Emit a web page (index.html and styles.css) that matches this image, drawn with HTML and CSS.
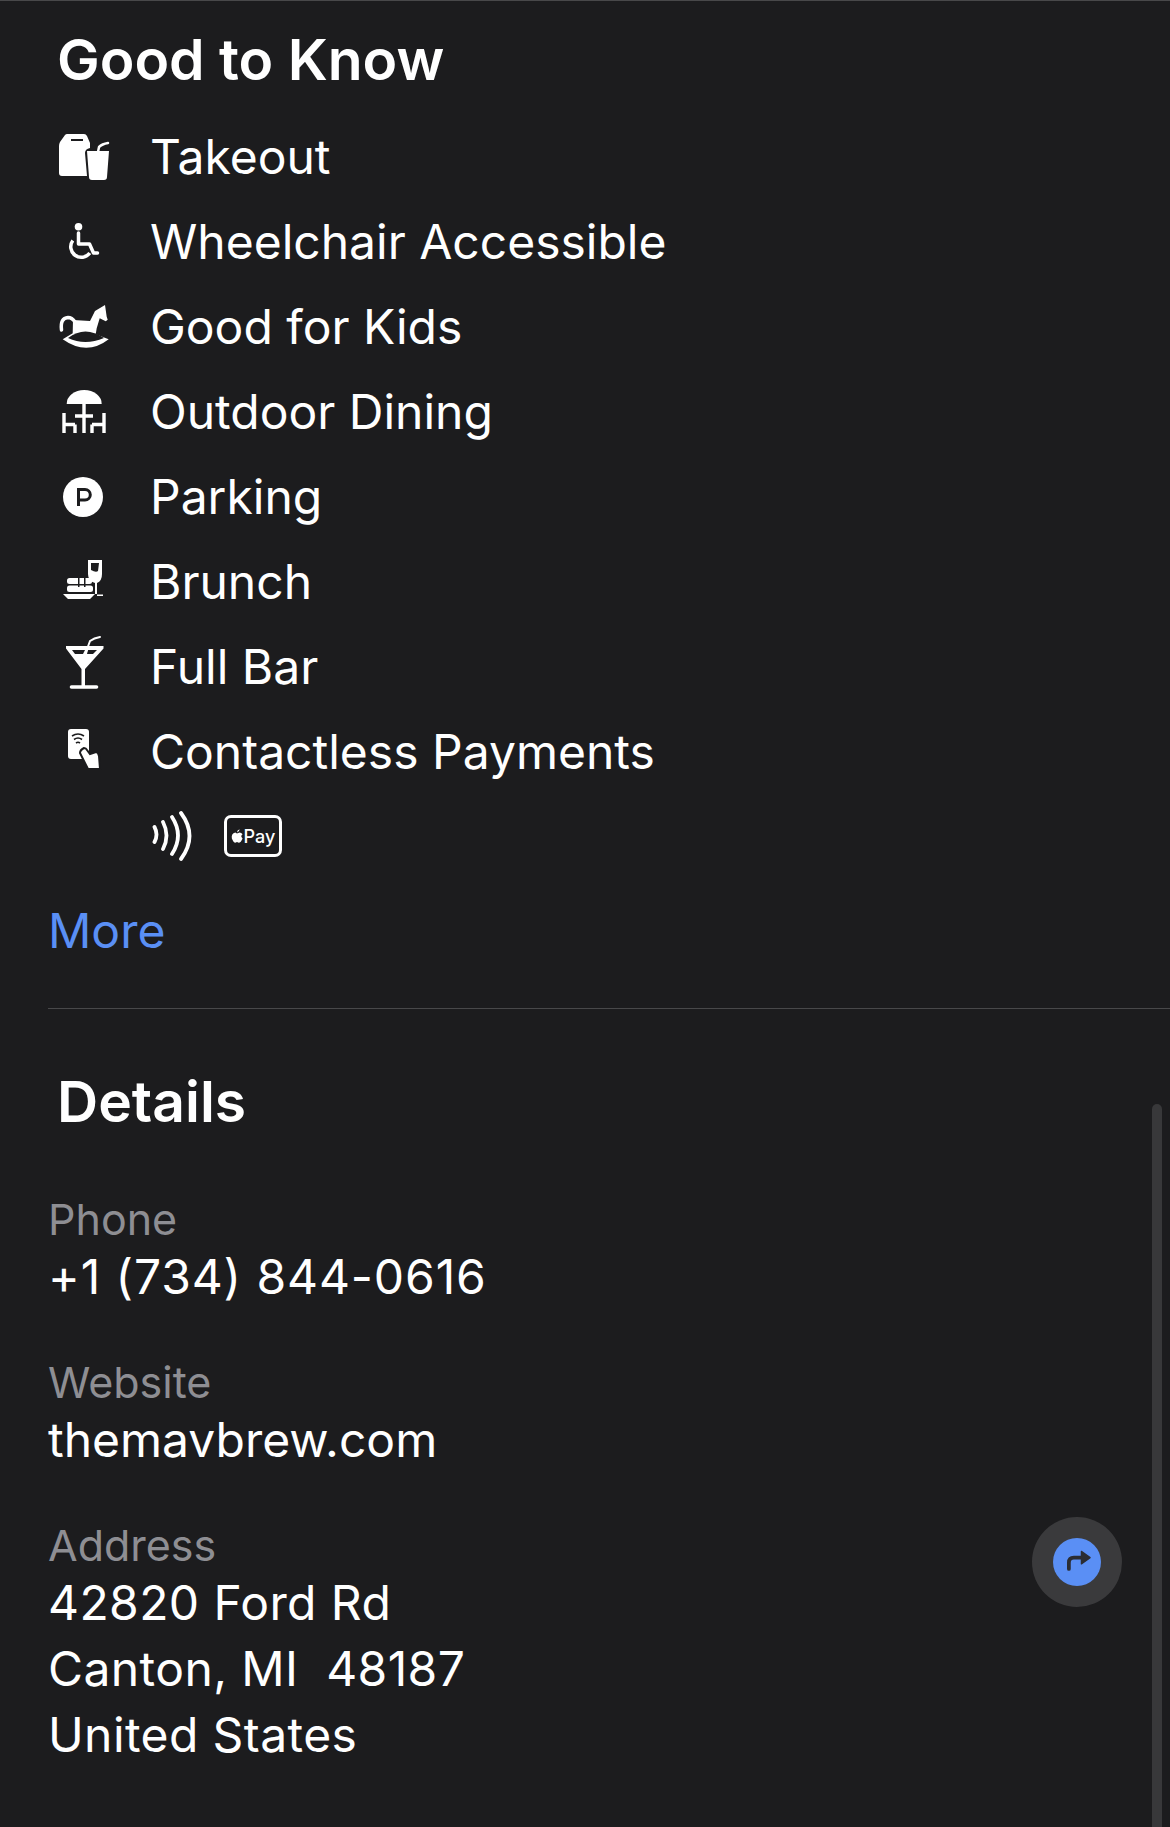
FILE: index.html
```html
<!DOCTYPE html>
<html lang="en">
<head>
    <meta charset="utf-8">
    <title>Place details</title>
    <link rel="stylesheet" href="styles.css">
</head>
<body>
    <main class="page">
        <section class="know">
            <h2 class="heading">Good to Know</h2>
            <ul class="amenities">
                <li class="amenity">
                    <svg class="icon" viewBox="0 0 50 54"><path fill="#fff" fill-rule="evenodd" d="M9 4h17q2 0 3 2l3 7v5q-5 1-5 5l2 23H4q-3 0-3-3V16q0-2 1-4l5-7q1-1 2-1zM13 9v2h12V9z"/><path fill="#fff" d="M29 21h22l-2 26q0 3-3 3H34q-3 0-3-3z"/><path fill="none" stroke="#fff" stroke-width="2.500" stroke-linecap="round" d="M40 22l1-5q3-3 9-4"/></svg>
                    <span>Takeout</span>
                </li>
                <li class="amenity">
                    <svg class="icon" viewBox="0 0 50 54"><circle cx="20.500" cy="11.700" r="3.800" fill="#fff"/><path fill="none" stroke="#fff" stroke-width="3.500" stroke-linecap="round" stroke-linejoin="round" d="M20.500 18v11h11l4 9h4"/><path fill="none" stroke="#fff" stroke-width="3.500" d="M14.800 25.500a10.500 10.500 0 1 0 17 12.500"/></svg>
                    <span>Wheelchair Accessible</span>
                </li>
                <li class="amenity">
                    <svg class="icon" viewBox="0 0 50 54"><path fill="#fff" d="M15 20l17 1 5-10 10-6 1.700 11.700 1 3-2 1.500-6-3-3 10-1 6 13 5q-22 17-46 0l10-6z"/><path fill="#1c1c1e" d="M10 38Q27 25 46 38 27 46 10 38z"/><path fill="none" stroke="#fff" stroke-width="3.500" stroke-linecap="round" d="M3.500 30Q2 18 10 17.500q4 0 7 4.500"/></svg>
                    <span>Good for Kids</span>
                </li>
                <li class="amenity">
                    <svg class="icon" viewBox="0 0 50 54"><path fill="#fff" d="M8.700 19a17.500 14 0 0 1 35 0z"/><path fill="none" stroke="#fff" stroke-width="3.400" d="M26 18v30M17 31h18M6 28v20M6 39.500h11M17 39.500V48M46 28v20M46 39.500H34M34 39.500V48"/></svg>
                    <span>Outdoor Dining</span>
                </li>
                <li class="amenity">
                    <svg class="icon" viewBox="0 0 50 54"><circle cx="25" cy="27" r="20" fill="#fff"/><path fill="none" stroke="#1c1c1e" stroke-width="3" d="M20.500 36V19.500h6.500a5.300 5.300 0 0 1 0 10.600h-6.500"/></svg>
                    <span>Parking</span>
                </li>
                <li class="amenity">
                    <svg class="icon" viewBox="0 0 50 54"><path fill="#fff" d="M30 5h14v14q0 7-5 9v11h-2V28q-7-2-7-9z"/><path fill="#1c1c1e" d="M33 8h8l-1 8q-2 2-7-1z"/><rect x="9" y="23" width="25" height="6" rx="2.500" fill="#fff"/><rect x="9" y="30.500" width="26" height="6.500" rx="2.500" fill="#fff"/><path fill="#1c1c1e" d="M20 22h1.500v10H20zM26 22h1.500v10H26z"/><path fill="#fff" d="M5 39h32l-5 5H10zM39 39.500h6V41h-6z"/></svg>
                    <span>Brunch</span>
                </li>
                <li class="amenity">
                    <svg class="icon" viewBox="0 0 50 54"><path fill="#fff" d="M8 6l37.500 0v2.500L27 29v17h-3.500V29L8 8.500z"/><path fill="#1c1c1e" d="M14 10h13l-2 4h-8zM30 10h9l-4 4h-6z"/><path fill="none" stroke="#fff" stroke-width="2" stroke-linecap="round" d="M28 12l4-11q4-3 10-4"/><path fill="none" stroke="#fff" stroke-width="3.600" stroke-linecap="round" d="M13.500 47h25"/></svg>
                    <span>Full Bar</span>
                </li>
                <li class="amenity">
                    <svg class="icon" viewBox="0 0 50 54"><rect x="10" y="4" width="21" height="30" rx="3" fill="#fff"/><path fill="none" stroke="#1c1c1e" stroke-width="1.600" d="M14 11q6-4 12 0M16 14.500q4-3 8 0M18 18q2-1.500 4 0"/><path fill="#fff" stroke="#1c1c1e" stroke-width="2" d="M22 28q0-3 4-5 2 0 3 2l3 4 6-2q2 0 3 4l1 13H30z"/></svg>
                    <span>Contactless Payments</span>
                </li>
            </ul>
            <div class="pay">
                <svg class="nfc" viewBox="0 0 40 50"><path fill="none" stroke="#fff" stroke-width="3.800" stroke-linecap="round" d="M2.500 16q4 7.500 0 15M11 11q7 13.500 0 27M20 6q12 18.500 0 37M29 2q17 23 0 46"/></svg>
                <div class="apple-pay"><svg class="apple" viewBox="0 0 14 16"><path fill="#fff" d="M10 4q2 0 3.500 2-3 2 0 5-2 5-4.500 5l-2-1-2 1Q3 16 1 11q-1-6 4-7l2 1zM7 4q0-3 3-4 0 3-3 4z"/></svg>Pay</div>
            </div>
            <a class="more">More</a>
        </section>
        <hr class="rule">
        <section class="details">
            <h2 class="heading">Details</h2>
            <div class="field">
                <div class="label">Phone</div>
                <div class="value phone">+1 (734) 844-0616</div>
            </div>
            <div class="field">
                <div class="label">Website</div>
                <div class="value">themavbrew.com</div>
            </div>
            <div class="field">
                <div class="label">Address</div>
                <div class="value address">42820 Ford Rd<br>Canton, MI&nbsp; 48187<br>United States</div>
                <div class="directions">
                    <div class="arrow-disc">
                        <svg viewBox="0 0 24 24"><path fill="none" stroke="#2b2d33" stroke-width="3" stroke-linecap="round" d="M5.500 17.500v-5q0-4 4-4h7"/><path fill="#2b2d33" stroke="#2b2d33" stroke-linejoin="round" d="M15.500 3.500l7 5-7 5z"/></svg>
                    </div>
                </div>
            </div>
        </section>
        <div class="scrollbar"></div>
    </main>
</body>
</html>
```

FILE: styles.css
```css
body {
    margin: 0;
    background-color: #1c1c1e;
    color: #fff;
    font-family: Inter, "Liberation Sans", sans-serif;
}

.page {
    position: relative;
    height: 1827px;
    overflow: hidden;
    border-top: 1px solid #48484a;
    box-sizing: border-box;
}

.know {
    padding: 27px 0 0 48px;
}

.heading {
    margin: 0;
    padding-left: 9px;
    font-size: 57px;
    line-height: 64px;
    font-weight: 600;
}

.amenities {
    list-style-type: none;
    margin: 22px 0 0;
    padding: 0;
}

.amenity {
    display: flex;
    align-items: center;
    height: 85px;
    font-size: 48px;
    font-weight: 400;
}

.icon {
    flex: none;
    width: 50px;
    height: 54px;
    margin-left: 10px;
    margin-right: 42px;
    overflow: visible;
}

.pay {
    display: flex;
    align-items: center;
    gap: 32px;
    margin-top: 17px;
    margin-left: 104px;
}

.nfc {
    width: 40px;
    height: 50px;
}

.apple-pay {
    display: flex;
    align-items: center;
    justify-content: center;
    width: 52px;
    height: 36px;
    border: 3px solid #fff;
    border-radius: 7px;
    font-size: 18px;
    font-weight: 500;
}

.apple {
    width: 12px;
    height: 14px;
    margin-right: 1px;
}

.more {
    display: block;
    margin-top: 41px;
    font-size: 48px;
    line-height: 58px;
    color: #5a8ff5;
}

.rule {
    margin: 48px 0 0 48px;
    border: 0;
    border-top: 1px solid #48484a;
}

.details {
    padding: 61px 0 0 48px;
}

.details .heading {
    margin-bottom: 60px;
}

.field {
    position: relative;
    margin-bottom: 47px;
}

.label {
    font-size: 43px;
    line-height: 50px;
    color: #8e8e93;
}

.value {
    font-size: 48px;
    line-height: 66px;
}

.phone {
    letter-spacing: 0.9px;
}

.address {
    letter-spacing: 0.4px;
}

.directions {
    position: absolute;
    left: 984px;
    top: -3px;
    display: flex;
    align-items: center;
    justify-content: center;
    width: 90px;
    height: 90px;
    border-radius: 50%;
    background-color: #3a3a3c;
}

.arrow-disc {
    display: flex;
    align-items: center;
    justify-content: center;
    width: 48px;
    height: 48px;
    border-radius: 50%;
    background-color: #5a8ff5;
}

.arrow-disc svg {
    width: 30px;
    height: 30px;
}

.scrollbar {
    position: absolute;
    left: 1152px;
    top: 1103px;
    width: 10px;
    height: 724px;
    border-radius: 5px 5px 0 0;
    background-color: #38383a;
}
```
